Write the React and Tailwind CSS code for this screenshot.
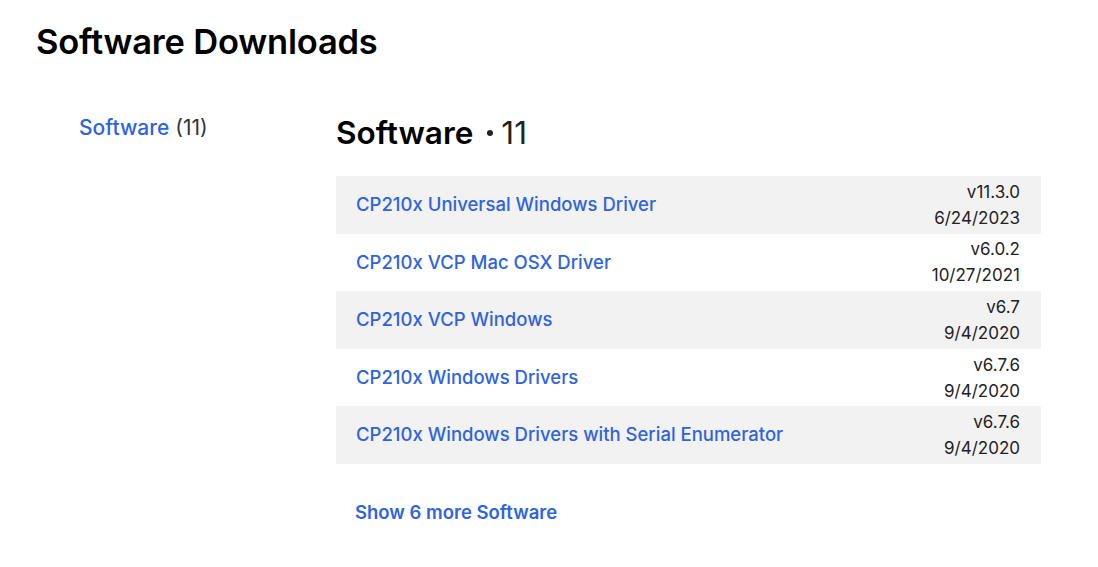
const rows = [
  { name: "CP210x Universal Windows Driver", version: "v11.3.0", date: "6/24/2023" },
  { name: "CP210x VCP Mac OSX Driver", version: "v6.0.2", date: "10/27/2021" },
  { name: "CP210x VCP Windows", version: "v6.7", date: "9/4/2020" },
  { name: "CP210x Windows Drivers", version: "v6.7.6", date: "9/4/2020" },
  { name: "CP210x Windows Drivers with Serial Enumerator", version: "v6.7.6", date: "9/4/2020" },
];

export default function App() {
  return (
    <div className="min-h-screen bg-white font-['Inter',sans-serif] text-black">
      {/* Page title */}
      <h1 className="pl-[36px] pt-[22px] text-[34.5px] font-semibold leading-[40px] tracking-[-0.2px]">
        Software Downloads
      </h1>

      <div className="flex pt-[51px]">
        {/* Sidebar */}
        <aside className="w-[336px] shrink-0 pl-[79px] pt-[1px]">
          <a href="#" className="text-[21px] leading-[28px]">
            <span className="font-medium text-[#2f63df]">Software</span>{" "}
            <span className="text-[#333]">(11)</span>
          </a>
        </aside>

        {/* Main list */}
        <main className="w-[705px]">
          <h2 className="flex items-center text-[31.5px] leading-[40px] font-semibold">
            Software
            <span className="ml-[14px] mr-[8px] h-[6px] w-[6px] rounded-full bg-[#222]" />
            <span className="font-normal text-[#222]">11</span>
          </h2>

          <ul className="mt-[23px]">
            {rows.map((row, i) => (
              <li
                key={row.name}
                className={`flex h-[57.6px] items-center justify-between pl-[20px] pr-[21px] ${
                  i % 2 === 0 ? "bg-[#f2f2f2]" : "bg-white"
                }`}
              >
                <a href="#" className="text-[18.5px] font-medium text-[#2f63df]">
                  {row.name}
                </a>
                <div className="text-right text-[17px] leading-[26px] text-[#222]">
                  <div>{row.version}</div>
                  <div>{row.date}</div>
                </div>
              </li>
            ))}
          </ul>

          <a href="#" className="mt-[35px] ml-[19px] block text-[18.5px] font-semibold text-[#2f63df]">
            Show 6 more Software
          </a>
        </main>
      </div>
    </div>
  );
}
